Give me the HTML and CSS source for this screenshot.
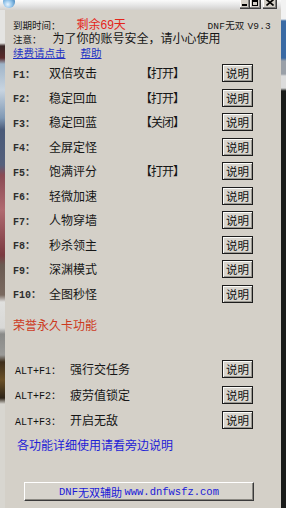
FILE: index.html
```html
<!DOCTYPE html>
<html lang="zh-CN">
<head>
<meta charset="utf-8">
<title>DNF无双 V9.3</title>
<link rel="stylesheet" href="styles.css">
</head>
<body>
<div class="screen">
  <div class="titlebar">
    <span class="app-icon"></span>
    <div class="win-buttons">
      <span class="wb wb-min"><span class="min-bar"></span></span>
      <span class="wb wb-max"><span class="max-box"></span></span>
      <span class="wb wb-close">
        <svg width="8" height="7" viewBox="0 0 8 7"><path d="M0.5 0.5 L7.5 6.5 M7.5 0.5 L0.5 6.5" stroke="#000" stroke-width="1.6"/></svg>
      </span>
    </div>
  </div>
  <div class="strip-left"></div>
  <main class="panel">
    <div class="head-line first">
      <div class="expire"><span class="small">到期时间：</span><span class="remain">剩余69天</span></div>
      <div class="version"><span class="mono">DNF</span>无双 <span class="mono">V9.3</span></div>
    </div>
    <div class="head-line">
      <span class="small">注意：</span><span class="notice">为了你的账号安全，请小心使用</span>
    </div>
    <div class="head-line links">
      <a class="link">续费请点击</a><a class="link help">帮助</a>
    </div>

    <div class="rows">
      <div class="row"><span class="key">F1：</span><span class="name">双倍攻击</span><span class="state">【打开】</span><span class="btn">说明</span></div>
      <div class="row"><span class="key">F2：</span><span class="name">稳定回血</span><span class="state">【打开】</span><span class="btn">说明</span></div>
      <div class="row"><span class="key">F3：</span><span class="name">稳定回蓝</span><span class="state">【关闭】</span><span class="btn">说明</span></div>
      <div class="row"><span class="key">F4：</span><span class="name">全屏定怪</span><span class="state"></span><span class="btn">说明</span></div>
      <div class="row"><span class="key">F5：</span><span class="name">饱满评分</span><span class="state">【打开】</span><span class="btn">说明</span></div>
      <div class="row"><span class="key">F6：</span><span class="name">轻微加速</span><span class="state"></span><span class="btn">说明</span></div>
      <div class="row"><span class="key">F7：</span><span class="name">人物穿墙</span><span class="state"></span><span class="btn">说明</span></div>
      <div class="row"><span class="key">F8：</span><span class="name">秒杀领主</span><span class="state"></span><span class="btn">说明</span></div>
      <div class="row"><span class="key">F9：</span><span class="name">深渊模式</span><span class="state"></span><span class="btn">说明</span></div>
      <div class="row"><span class="key">F10：</span><span class="name">全图秒怪</span><span class="state"></span><span class="btn">说明</span></div>
    </div>

    <div class="honor">荣誉永久卡功能</div>

    <div class="alt-rows">
      <div class="alt-row"><span class="key">ALT+F1：</span><span class="name">强行交任务</span><span class="btn">说明</span></div>
      <div class="alt-row"><span class="key">ALT+F2：</span><span class="name">疲劳值锁定</span><span class="btn">说明</span></div>
      <div class="alt-row"><span class="key">ALT+F3：</span><span class="name">开启无敌</span><span class="btn">说明</span></div>
    </div>

    <div class="tip">各功能详细使用请看旁边说明</div>

    <div class="site-btn"><span class="mono">DNF</span>无双辅助 <span class="mono">www.dnfwsfz.com</span></div>
  </main>
  <div class="strip-right"></div>
</div>
</body>
</html>
```
FILE: styles.css
```css
html, body {
  margin: 0;
  padding: 0;
}
body {
  width: 286px;
  height: 508px;
  overflow: hidden;
  background: #d4d0c8;
  font-family: "Noto Sans CJK SC", "Noto Sans", sans-serif;
  color: #161616;
}
.mono {
  font-family: "Liberation Mono", "DejaVu Sans Mono", monospace;
}
.screen {
  display: grid;
  grid-template-columns: 5px 276px 5px;
  grid-template-rows: 10px 498px;
  height: 508px;
}

/* title bar remnant */
.titlebar {
  grid-column: 1 / 3;
  grid-row: 1;
  display: flex;
  justify-content: space-between;
  align-items: flex-end;
  overflow: hidden;
  padding-right: 4px;
  background: linear-gradient(#fbfbfb, #e2e2e2 60%, #d2d0cc);
}
.app-icon {
  width: 12px;
  height: 12px;
  margin: 0 0 2px 3px;
  border-radius: 50%;
  background: radial-gradient(circle at 40% 70%, #e8f4ff 0, #8cc0e8 40%, #3f7fb8 80%);
}
.win-buttons {
  display: flex;
  height: 13px;
}
.wb {
  display: flex;
  align-items: flex-end;
  justify-content: center;
  height: 12px;
  background: #d4d0c8;
  border-right: 1px solid #404040;
  border-bottom: 1px solid #404040;
  box-shadow: inset -1px -1px #808080, inset 1px 1px #fff;
  box-sizing: border-box;
  padding-bottom: 2px;
}
.wb-min { width: 10px; }
.wb-max { width: 11px; }
.wb-close { width: 14px; margin-left: 2px; }
.min-bar {
  width: 5px;
  height: 2px;
  background: #000;
}
.max-box {
  width: 6px;
  height: 6px;
  border: 1px solid #000;
  border-top-width: 2px;
  box-sizing: border-box;
}

/* background strips from the screen behind */
.strip-left {
  grid-column: 1;
  grid-row: 2;
  background: linear-gradient(
    #e4e4e2 0, #e4e4e2 33px,
    #3a2828 36px, #5a2a2a 48px,
    #9fb4c8 54px, #c8d4e0 80px, #7f98b4 108px,
    #4a5a78 120px, #55607c 155px,
    #8a4a54 165px, #b06a70 200px, #7a3a40 245px,
    #6a5a52 255px, #7a6a60 285px,
    #e0e0de 292px, #d8d8d6 318px,
    #8a8a88 324px, #9a9a98 345px,
    #3e2e1c 352px, #6a5028 370px, #2e2418 388px,
    #d8d6d0 394px, #d8d6d0 498px);
}
.strip-right {
  grid-column: 3;
  grid-row: 1 / 3;
  background: linear-gradient(
    #f2f2f2 0, #f2f2f2 19px,
    #3a6aa4 21px, #3a6aa4 58px,
    #9aa0a8 61px, #9aa0a8 74px,
    #dcdcdc 76px, #dcdcdc 88px,
    #1a1c1a 91px, #1a1c1a 508px);
}

/* dialog */
.panel {
  grid-column: 2;
  grid-row: 2;
  padding: 9px 10px 0 8px;
  display: flex;
  flex-direction: column;
}
.head-line {
  display: flex;
  align-items: center;
  height: 13.5px;
  white-space: nowrap;
  font-family: "Liberation Sans", "Noto Sans CJK SC", sans-serif;
}
.expire {
  display: flex;
  align-items: center;
  flex: 1;
}
.small {
  font-size: 9.5px;
  line-height: 11px;
}
.remain {
  font-size: 12px;
  line-height: 13px;
  color: #e4251b;
  margin-left: 16px;
}
.version {
  font-size: 9.5px;
  line-height: 11px;
  letter-spacing: 0.2px;
}
.version .mono {
  font-size: 9.5px;
}
.notice {
  font-size: 12px;
  line-height: 13px;
  margin-left: 11px;
}
.links {
  margin-top: 0.5px;
}
.link {
  font-size: 10.5px;
  line-height: 12px;
  color: #2130c4;
  text-decoration: underline;
}
.help {
  margin-left: 15px;
}

/* function rows */
.rows {
  margin-top: 4px;
  display: flex;
  flex-direction: column;
  gap: 6.5px;
}
.row {
  display: grid;
  grid-template-columns: 36px 94px 79px 31px;
  align-items: center;
  height: 18px;
}
.key {
  font-family: "Liberation Mono", "Noto Sans CJK SC", monospace;
  font-size: 10px;
  font-weight: bold;
  color: #2e2e2e;
  white-space: nowrap;
}
.name {
  font-size: 12px;
  line-height: 14px;
  white-space: nowrap;
}
.state {
  font-size: 12px;
  line-height: 14px;
  margin-left: -3px;
  letter-spacing: -1px;
  white-space: nowrap;
}
.btn {
  display: flex;
  align-items: center;
  justify-content: center;
  width: 31px;
  height: 18px;
  box-sizing: border-box;
  border: 1px solid #1c1c1c;
  box-shadow: inset 1px 1px #fbfbf8, inset -1px -1px #9a9892;
  background: #d8d5ce;
  font-size: 11.5px;
  line-height: 12px;
  color: #111;
}

.honor {
  margin-top: 15.5px;
  font-size: 12px;
  line-height: 14px;
  color: #cc3a1e;
}

.alt-rows {
  margin-top: 28px;
  display: flex;
  flex-direction: column;
  gap: 7.5px;
}
.alt-row {
  display: grid;
  grid-template-columns: 55px 152px 31px;
  align-items: center;
  height: 18px;
  margin-left: 2px;
}
.alt-row .key {
  font-weight: normal;
  color: #111;
}

.tip {
  margin: 9px 0 0 4px;
  font-size: 12px;
  line-height: 14px;
  color: #1d22d6;
}

.site-btn {
  margin: 30px 0 0 11px;
  width: 230px;
  height: 19px;
  box-sizing: border-box;
  display: flex;
  align-items: center;
  justify-content: center;
  font-size: 11px;
  color: #1a1ad8;
  white-space: pre;
  background: #d6d3cc;
  border-top: 1px solid #fff;
  border-left: 1px solid #fff;
  border-right: 1px solid #3a3a3a;
  border-bottom: 1px solid #3a3a3a;
  box-shadow: inset -1px -1px #8a8882;
}
.site-btn .mono {
  font-size: 10.5px;
}
```
